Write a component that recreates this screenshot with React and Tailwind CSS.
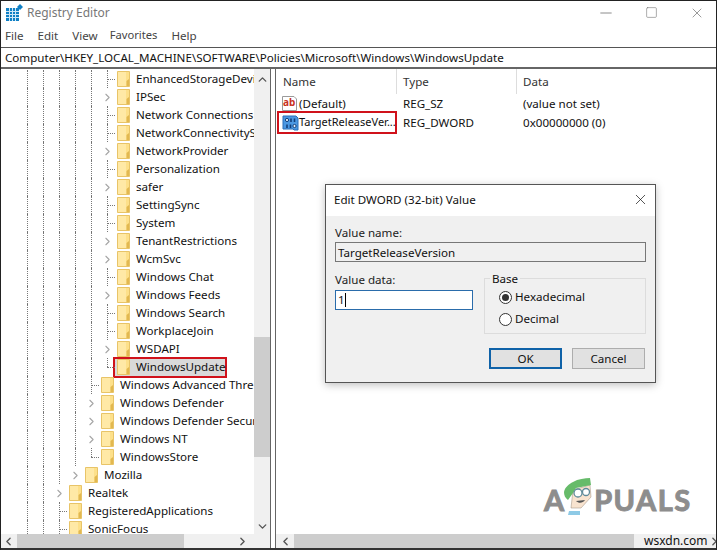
import React from 'react';
import { ChevronRight, ChevronLeft, ChevronUp, ChevronDown, X, Minus, Square } from 'lucide-react';

const rows = [
  { name: 'EnhancedStorageDevi', depth: 5 },
  { name: 'IPSec', depth: 5, arrow: true },
  { name: 'Network Connections', depth: 5 },
  { name: 'NetworkConnectivityS', depth: 5 },
  { name: 'NetworkProvider', depth: 5, arrow: true },
  { name: 'Personalization', depth: 5 },
  { name: 'safer', depth: 5, arrow: true },
  { name: 'SettingSync', depth: 5 },
  { name: 'System', depth: 5 },
  { name: 'TenantRestrictions', depth: 5, arrow: true },
  { name: 'WcmSvc', depth: 5, arrow: true },
  { name: 'Windows Chat', depth: 5 },
  { name: 'Windows Feeds', depth: 5, arrow: true },
  { name: 'Windows Search', depth: 5 },
  { name: 'WorkplaceJoin', depth: 5 },
  { name: 'WSDAPI', depth: 5, arrow: true },
  { name: 'WindowsUpdate', depth: 5, last: true, selected: true },
  { name: 'Windows Advanced Thre', depth: 4 },
  { name: 'Windows Defender', depth: 4, arrow: true },
  { name: 'Windows Defender Secur', depth: 4, arrow: true },
  { name: 'Windows NT', depth: 4, arrow: true },
  { name: 'WindowsStore', depth: 4, last: true },
  { name: 'Mozilla', depth: 3, arrow: true },
  { name: 'Realtek', depth: 2, arrow: true },
  { name: 'RegisteredApplications', depth: 2 },
  { name: 'SonicFocus', depth: 2 },
];

const Folder = () => (
  <svg width="14" height="16" viewBox="0 0 14 16" className="shrink-0">
    <path d="M0.5 0.5H12.5V15.5H0.5Z" fill="#fde08a" stroke="#e8c468" />
    <path d="M1 1H9V15H1Z" fill="#ffe9a6" />
    <path d="M9.5 10L12 8V15H9.5Z" fill="#e2b850" />
  </svg>
);

const TreeRow = ({ row }) => {
  const guides = Array.from({ length: row.depth });
  return (
    <div className="flex h-[18px] shrink-0 items-center pl-[26px]">
      {guides.map((_, i) => (
        <div key={i} className="h-full w-4 shrink-0 border-l border-dotted border-[#777]" />
      ))}
      <div className="relative flex h-full w-[10px] shrink-0 items-center">
        {row.arrow ? (
          <ChevronRight size={13} strokeWidth={2} className="absolute -left-[6px] text-[#a6a6a6]" />
        ) : (
          <>
            <div className={`absolute left-0 top-0 border-l border-dotted border-[#777] ${row.last ? 'h-1/2' : 'h-full'}`} />
            <div className="w-2 border-t border-dotted border-[#777]" />
          </>
        )}
      </div>
      {row.selected ? (
        <div className="-ml-[4px] flex h-[21px] w-[114px] shrink-0 items-center border-2 border-[#d0121b] bg-[#d9d9d9] pl-[2px]">
          <Folder />
          <span className="ml-[5px] whitespace-nowrap">{row.name}</span>
        </div>
      ) : (
        <>
          <Folder />
          <span className="ml-[5px] whitespace-nowrap">{row.name}</span>
        </>
      )}
    </div>
  );
};

const Radio = ({ label, checked }) => (
  <div className="flex h-[22px] items-center">
    <div className="flex h-[13px] w-[13px] items-center justify-center rounded-full border border-[#333] bg-white">
      {checked && <div className="h-[7px] w-[7px] rounded-full bg-[#333]" />}
    </div>
    <span className="ml-[3px]">{label}</span>
  </div>
);

const DwordIcon = () => (
  <svg width="17" height="16" viewBox="0 0 17 16" className="shrink-0">
    <path d="M1 1H14L16 3V15H12L11 14H1Z" fill="#4b98e2" stroke="#2a6fb8" />
    <circle cx="5" cy="5" r="1.6" fill="#e6f2fc" stroke="#123f7a" />
    <path d="M9 3.5V7M12.5 3.5V7M5 9.5V13" stroke="#123f7a" strokeWidth="1.6" />
    <path d="M8.5 9.5V13" stroke="#123f7a" strokeWidth="1.6" />
    <circle cx="12.5" cy="11" r="1.6" fill="#e6f2fc" stroke="#123f7a" />
  </svg>
);

const AbIcon = () => (
  <svg width="15" height="15" viewBox="0 0 15 15" className="shrink-0">
    <path d="M0.5 0.5H12L14.5 3V14.5H0.5Z" fill="#fff" stroke="#9a9a9a" />
    <text x="1" y="10" fontSize="10" fontWeight="700" fill="#c8321e">ab</text>
  </svg>
);

const App = () => {
  return (
    <div className="relative flex h-[550px] w-[717px] flex-col overflow-hidden border-l border-r border-t border-[#222] bg-white font-['Noto_Sans',sans-serif] text-[11.6px] text-[#111]">
      {/* Title bar */}
      <div className="flex h-[23px] shrink-0 items-center pl-[5px]">
        <svg width="17" height="17" viewBox="0 0 17 17">
          <path d="M0 4H13V17H0Z" fill="#0f7fc4" />
          <path d="M3.5 4V17M6.5 4V17M9.5 4V17M0 7.5H13M0 10.5H13M0 13.5H13" stroke="#cfe8f8" strokeWidth="1" />
          <path d="M14 0L17 3L14 6L11 3Z" fill="#0f7fc4" />
        </svg>
        <span className="ml-[4px] text-[12px] text-[#777]">Registry Editor</span>
        <div className="ml-auto flex items-center text-[#666]">
          <Minus size={18} strokeWidth={1} className="mr-[30px]" />
          <Square size={13} strokeWidth={1} className="mr-[31px]" />
          <X size={16} strokeWidth={1} className="mr-[11px]" />
        </div>
      </div>

      {/* Menu */}
      <div className="flex h-[24px] shrink-0 items-center gap-[14px] border-b border-[#555] pl-[4px] text-[#444]">
        <span>File</span>
        <span>Edit</span>
        <span>View</span>
        <span className="-ml-[2px] text-[11.2px]">Favorites</span>
        <span>Help</span>
      </div>

      {/* Address bar */}
      <div className="flex h-[21px] shrink-0 items-center border-b-2 border-[#666] pl-[4px] whitespace-nowrap">
        Computer\HKEY_LOCAL_MACHINE\SOFTWARE\Policies\Microsoft\Windows\WindowsUpdate
      </div>

      <div className="flex min-h-0 flex-1">
        {/* Tree pane */}
        <div className="flex w-[270px] shrink-0 flex-col border-r border-[#666]">
          <div className="flex min-h-0 flex-1">
            <div className="flex min-w-0 flex-1 flex-col overflow-hidden pt-[1px]">
              {rows.map((row) => (
                <TreeRow key={row.name} row={row} />
              ))}
            </div>
            <div className="flex w-[16px] shrink-0 flex-col bg-[#f0f0f0] text-[#555]">
              <ChevronUp size={13} strokeWidth={2.5} className="mx-auto mt-[4px]" />
              <div className="mt-[251px] h-[120px] bg-[#cdcdcd]" />
              <ChevronDown size={13} strokeWidth={2.5} className="mx-auto mt-auto mb-[1px]" />
            </div>
          </div>
          <div className="flex h-[14px] shrink-0 items-center bg-[#f0f0f0] text-[#555]">
            <ChevronLeft size={13} strokeWidth={2.5} className="ml-[1px] shrink-0" />
            <div className="ml-[2px] h-full w-[167px] bg-[#cdcdcd]" />
            <ChevronRight size={13} strokeWidth={2.5} className="ml-[52px] shrink-0" />
          </div>
        </div>

        {/* List pane */}
        <div className="ml-[4px] flex min-w-0 flex-1 flex-col border-l border-[#666]">
          <div className="flex h-[25px] shrink-0 text-[#333]">
            <div className="h-full w-[121px] border-r border-[#ddd] pl-[7px] leading-[26px]">Name</div>
            <div className="h-full w-[120px] border-r border-[#ddd] pl-[6px] leading-[26px]">Type</div>
            <div className="h-full pl-[6px] leading-[26px]">Data</div>
          </div>
          <div className="flex h-[19px] shrink-0 items-center">
            <div className="flex w-[121px] items-center pl-[6px]">
              <AbIcon />
              <span className="ml-[2px]">(Default)</span>
            </div>
            <div className="w-[120px] pl-[6px]">REG_SZ</div>
            <div className="pl-[6px]">(value not set)</div>
          </div>
          <div className="flex h-[19px] shrink-0 items-center">
            <div className="ml-[1px] flex h-[23px] w-[120px] items-center overflow-hidden whitespace-nowrap border-2 border-[#d0121b] pl-[3px]">
              <DwordIcon />
              <span className="text-[11px]">TargetReleaseVer...</span>
            </div>
            <div className="w-[120px] pl-[6px]">REG_DWORD</div>
            <div className="pl-[6px]">0x00000000 (0)</div>
          </div>
          <div className="mt-auto flex h-[14px] shrink-0 items-center bg-[#f0f0f0] text-[#555]">
            <ChevronLeft size={13} strokeWidth={2.5} className="ml-[3px] shrink-0" />
            <div className="ml-[2px] h-full w-[340px] shrink-0 bg-[#cdcdcd]" />
            <span className="ml-[10px] text-[12px] text-[#111]">wsxdn.com</span>
            <ChevronRight size={13} strokeWidth={2.5} className="ml-auto mr-[1px] shrink-0" />
          </div>
        </div>
      </div>
      <div className="h-[2px] shrink-0 bg-[#333]" />

      {/* Dialog */}
      <div className="absolute left-[324px] top-[183px] flex h-[199px] w-[331px] flex-col border border-[#555] bg-[#f0f0f0] shadow-[0_2px_8px_rgba(0,0,0,0.25)]">
        <div className="flex h-[31px] shrink-0 items-center bg-white pb-[2px] pl-[8px]">
          <span>Edit DWORD (32-bit) Value</span>
          <X size={17} strokeWidth={1} className="ml-auto mr-[6px]" />
        </div>
        <div className="flex flex-1 flex-col px-[9px] pt-[8px]">
          <div className="leading-[17px] text-[#222]">Value name:</div>
          <div className="mt-[1px] h-[20px] w-[311px] border border-[#777] bg-[#f0f0f0] pl-[2px] leading-[19px]">TargetReleaseVersion</div>
          <div className="mt-[9px] flex">
            <div className="w-[138px]">
              <div className="leading-[17px] text-[#222]">Value data:</div>
              <div className="mt-[2px] flex h-[20px] items-center border border-[#2a6cab] bg-white pl-[2px]">
                1<span className="h-[14px] w-px bg-black" />
              </div>
            </div>
            <div className="relative ml-[11px] mt-[7px] h-[56px] w-[162px] border border-[#dcdcdc] pl-[14px] pt-[7px]">
              <span className="absolute -top-[9px] left-[5px] bg-[#f0f0f0] px-[2px]">Base</span>
              <Radio label="Hexadecimal" checked />
              <Radio label="Decimal" />
            </div>
          </div>
          <div className="mt-[14px] flex justify-end gap-[10px] pr-[1px]">
            <div className="flex h-[21px] w-[73px] items-center justify-center border-2 border-[#0f62a8] bg-[#e1e1e1]">OK</div>
            <div className="flex h-[21px] w-[73px] items-center justify-center border border-[#adadad] bg-[#e1e1e1]">Cancel</div>
          </div>
        </div>
      </div>

      {/* Watermark */}
      <div className="absolute left-[543px] top-[477px] flex items-end font-['Lato',sans-serif] text-[29px] font-bold leading-none text-[#8d8d8d] [-webkit-text-stroke:1px_#8d8d8d]">
        <span className="mb-[1px]">A</span>
        <svg width="30" height="37" viewBox="0 0 30 37" className="-ml-[1px] shrink-0">
          <path d="M10 12L27 7L28 19L18 30H8Z" fill="#f8e3cf" stroke="#9a8a7a" strokeWidth="0.5" />
          <path d="M1 14C2 9 6 6 10 4C15 1 22 0 27 0L28 7L13 10L10 15L5 22C2 20 1 17 1 14Z" fill="#66bb6a" />
          <circle cx="15" cy="15" r="4" fill="#fff" stroke="#5f8a9a" strokeWidth="1.3" />
          <circle cx="23" cy="14" r="3.5" fill="#fff" stroke="#5f8a9a" strokeWidth="1.3" />
          <path d="M13 23C16 26 20 25 22 22Z" fill="#555" />
          <path d="M6 33H17V37H5Z" fill="#8ecae6" />
        </svg>
        <span className="mb-[1px] ml-[1px] tracking-[1.5px]">PUALS</span>
      </div>
    </div>
  );
};

export default App;
